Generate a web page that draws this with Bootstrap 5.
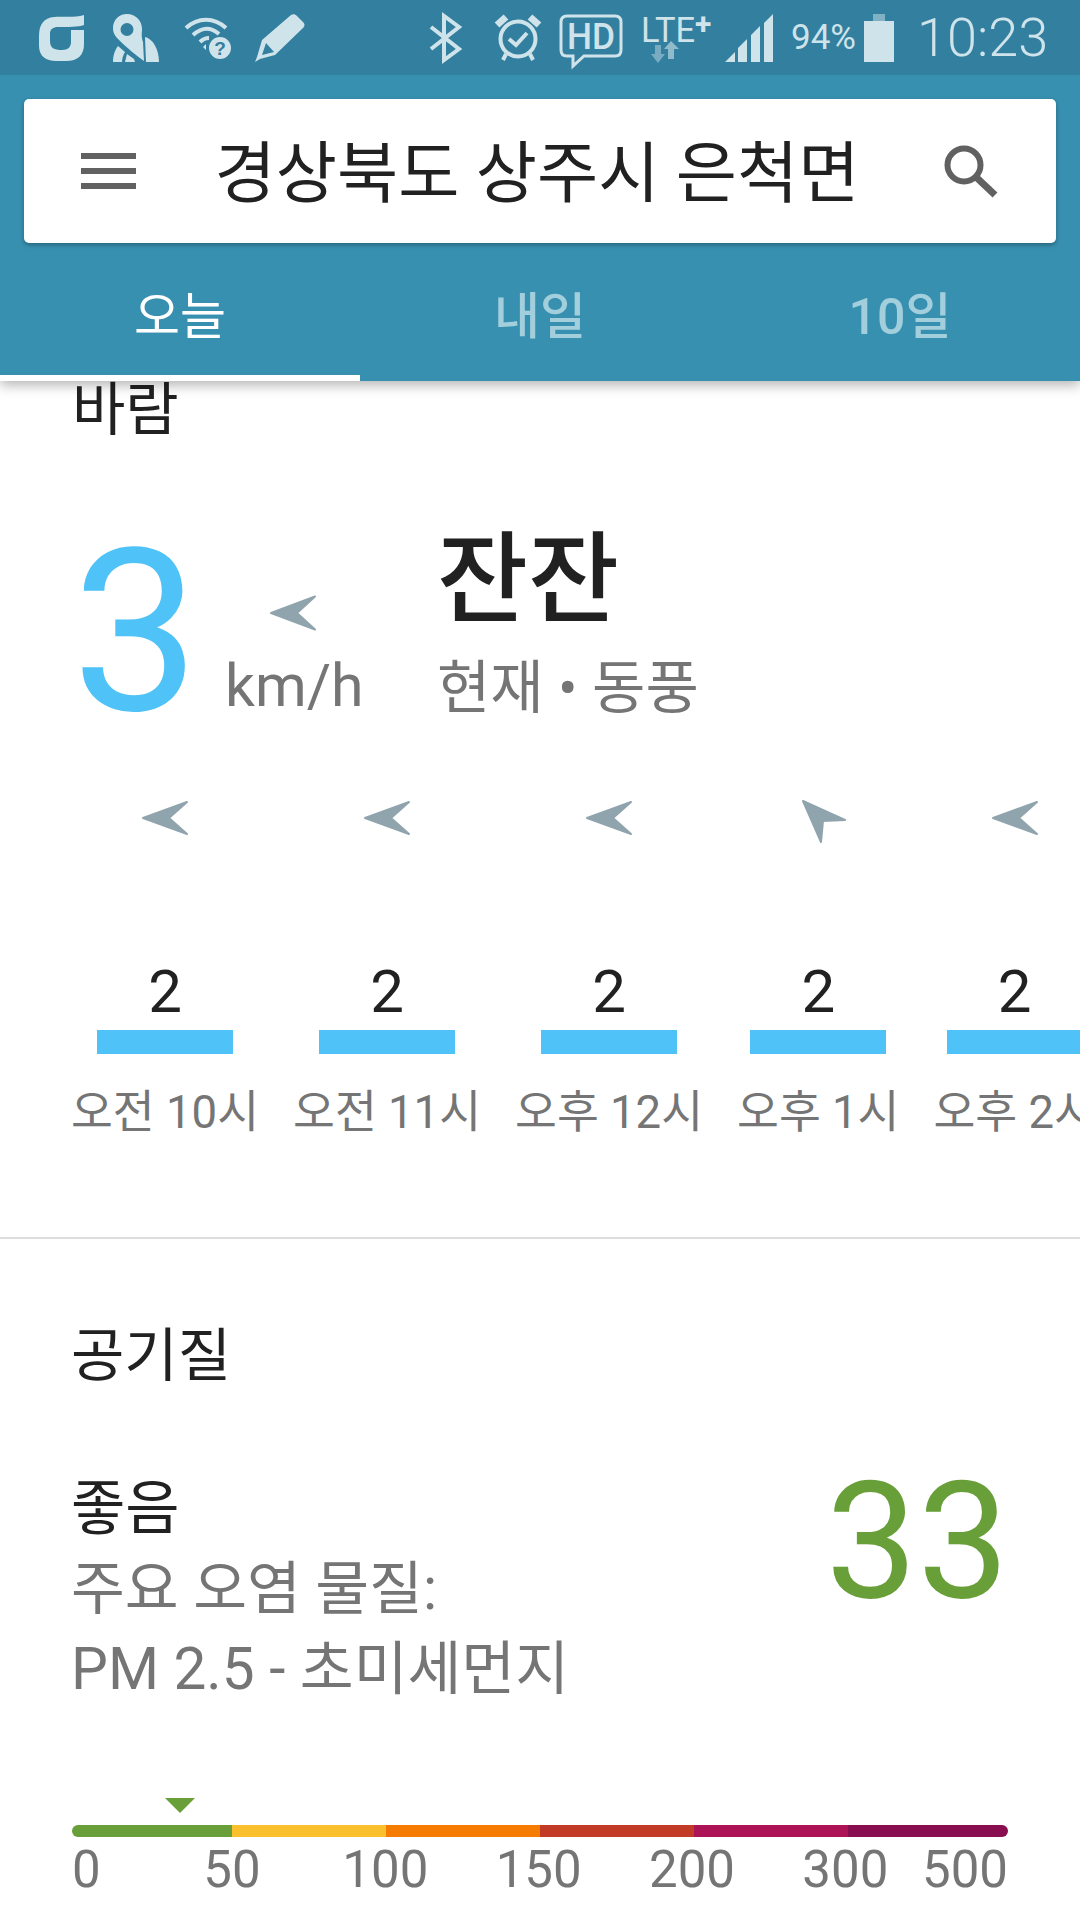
<!DOCTYPE html>
<html lang="ko">

<head>
  <meta charset="UTF-8">
  <meta name="viewport" content="width=device-width, initial-scale=1.0">
  <title>날씨</title>
  <link rel="stylesheet" href="https://cdn.jsdelivr.net/npm/bootstrap@5.3.0/dist/css/bootstrap.min.css">
  <style>
    html, body { width: 1080px; height: 1920px; overflow: hidden; background: #fff; }
    body { font-family: Roboto, "Noto Sans CJK KR", sans-serif; color: #212121; }

    .appbar { background: #3790b0; position: relative; z-index: 2; box-shadow: 0 4px 12px rgba(0,0,0,.3); }
    .statusbar { height: 75px; background: #337f9f; color: #cfe3ea; }
    .statusbar svg { display: block; flex: none; overflow: visible; }
    .st-pct { font-size: 35px; margin-left: 18px; line-height: 1; }
    .st-time { font-size: 54px; font-weight: 300; margin-left: 23px; line-height: 1; }

    .searchbox { margin: 24px 24px 0; height: 144px; border: 0; border-radius: 5px; box-shadow: 0 2px 4px rgba(0,0,0,.3); padding: 0 58px 0 57px; }
    .searchtext { font-size: 66.500px; line-height: 1; color: #212121; flex: 1; text-align: center; padding-right: 6px; margin-top: 6px; }

    .tabbar { height: 138px; }
    .tabbar .nav-link { height: 138px; padding: 44px 0 0; font-size: 50px; line-height: 60px; font-weight: 500; color: #a3cfdd; border-bottom: 6px solid transparent; }
    .tabbar .nav-link.active { color: #fff; font-weight: 400; border-bottom-color: #fff; }

    .pane { padding-left: 72px; }
    .sect-title { font-size: 58px; line-height: 64px; }
    .wind-title { line-height: 58px; }

    .wind-now { height: 236px; margin-top: 58px; }
    .wind-num { width: 151px; font-size: 227px; font-weight: 400; line-height: 236px; color: #4fc3f7; margin-top: 17px; }
    .wind-unit { width: 214px; padding-left: 2px; color: #757575; font-size: 59px; line-height: 64px; }
    .wind-unit svg { display: block; margin: 98px 0 0 46px; overflow: visible; stroke: #90a4ae; stroke-width: 2px; stroke-linejoin: round; }
    .wind-unit div { margin-bottom: 15px; }
    .wind-desc { font-size: 99px; line-height: 110px; font-weight: 500; margin-top: 28px; }
    .wind-sub { font-size: 58px; line-height: 64px; color: #757575; margin-top: 21px; }

    .hours { margin-top: 68px; margin-left: -1px; gap: 34px; white-space: nowrap; }
    .hour-col { flex: none; }
    .hour-arrow { height: 45px; overflow: visible; stroke: #90a4ae; stroke-width: 2px; stroke-linejoin: round; }
    .hour-turn { margin-left: 14px; }
    .hour-val { font-size: 60px; line-height: 64px; margin-top: 114px; }
    .hour-bar { width: 136px; height: 24px; background: #4fc3f7; margin-top: 6px; }
    .hour-label { font-size: 45.500px; line-height: 56px; color: #757575; margin-top: 31px; }

    .divider { height: 2px; background: #ddd; margin-top: 96px; }

    .air-title { margin-top: 85px; margin-left: 71px; }
    .air-row { margin: 91px 72px 0 71px; }
    .air-grade { font-size: 59px; line-height: 60px; color: #212121; margin-bottom: 10px; }
    .air-text { font-size: 58.500px; line-height: 80px; color: #757575; }
    .air-num { font-size: 163px; line-height: 168px; color: #689f38; margin-top: -21px; margin-right: -1px; }

    .scale-wrap { margin: 89px 72px 0; }
    .scale-mark { display: block; margin-left: 93px; }
    .scale-bar { height: 12px; margin-top: 12px; border-radius: 6px; overflow: hidden; }
    .seg-a { width: 160px; background: #689f38; }
    .seg-b { width: 154px; background: #fbc02d; }
    .seg-c { width: 154px; background: #f57c00; }
    .seg-d { width: 154px; background: #c13b26; }
    .seg-e { width: 154px; background: #ad1457; }
    .seg-f { flex: 1; background: #880e4f; }
    .scale-labels { font-size: 51px; line-height: 56px; color: #757575; margin-top: 5px; }
    .lab-first { width: 84px; }
    .lab-mid { width: 154.500px; text-align: center; }
    .lab-last { flex: 1; text-align: right; }
  </style>
</head>

<body>
  <div class="appbar">
    <div class="statusbar d-flex align-items-center">
      <!-- left notification icons -->
      <svg width="46" height="47" viewBox="0 0 46 47" style="margin-left:38px" fill="#cfe3ea"><path d="M46 1C36 4 24 2 16 3C6 4 1 10 1 22V32C1 42 8 47 18 47H28C40 47 46 41 46 30V16H33V28C33 33 30 36 24 36C16 36 12 34 12 27V20C12 15 15 13 20 13C30 13 40 13 46 11Z"/></svg>
      <svg width="47" height="48" viewBox="0 0 47 48" style="margin-left:28px" fill="#cfe3ea"><path fill-rule="evenodd" d="M15 0C24 0 30 7 30 15C30 19 29 22 31 28L32 47C25 42 15 34 7 26C3 22 1 19 1 14C1 6 7 0 15 0ZM15 9A6.500 6.500 0 1 0 15 22A6.500 6.500 0 1 0 15 9Z"/><path d="M33 23C41 25 47 35 47 48H34ZM6 32L13 38C11 41 10 45 10 48H1C1 41 3 36 6 32ZM15 40L22 45L23 48H13Z"/></svg>
      <svg width="47" height="42" viewBox="0 0 47 42" style="margin-left:25px"><g fill="none" stroke="#cfe3ea" stroke-width="4"><path d="M2 11C14 0 30 0 42 11"/><path d="M9 18C18 10 27 10 35 17"/><path d="M16 25C19 22 22 21 25 21"/></g><path d="M22 33L19 30L22 27Z" fill="#cfe3ea"/><circle cx="36" cy="31" r="11" fill="#cfe3ea"/><text x="36" y="38" font-family="Liberation Sans" font-weight="700" font-size="19" text-anchor="middle" fill="#337f9f">?</text></svg>
      <svg width="50" height="48" viewBox="0 0 50 48" style="margin-left:24px" fill="#cfe3ea"><path fill-rule="evenodd" d="M36 1C38 0 40 0 42 2L48 8C50 10 50 12 48 14L20 41L5 45L0 48L2 43L7 26ZM11 29L7 41L19 38Z"/></svg>
      <svg width="33" height="48" viewBox="0 0 33 48" style="margin-left:124px" fill="none" stroke="#cfe3ea" stroke-width="4"><path d="M2 13L30 35L15 46V2L30 13L2 35"/></svg>
      <svg width="46" height="47" viewBox="0 0 46 47" style="margin-left:33px" fill="none" stroke="#cfe3ea"><circle cx="23" cy="25" r="17.500" stroke-width="4"/><path d="M14 25L21 31L32 19" stroke-width="4"/><path d="M2 11L11 3M35 3L44 11" stroke-width="7"/><path d="M11 40L8 46M35 40L38 46" stroke-width="4"/></svg>
      <svg width="64" height="54" viewBox="0 0 64 54" style="margin-left:18px;margin-top:6px"><path d="M8 2H56C60 2 62 4 62 8V36C62 40 60 42 56 42H25L14 52V42H8C4 42 2 40 2 36V8C2 4 4 2 8 2Z" fill="none" stroke="#cfe3ea" stroke-width="3"/><text x="32" y="35" font-family="Roboto" font-weight="500" font-size="37" text-anchor="middle" textLength="48" lengthAdjust="spacingAndGlyphs" fill="#cfe3ea">HD</text></svg>
      <svg width="72" height="50" viewBox="0 0 72 50" style="margin-left:18px"><text x="0" y="29" font-family="Roboto" font-size="35" textLength="54" lengthAdjust="spacingAndGlyphs" fill="#cfe3ea">LTE</text><text x="54" y="21" font-family="Roboto" font-weight="700" font-size="30" fill="#cfe3ea">+</text><path d="M14 32H20V41H24L17 50L10 41H14Z" fill="#cfe3ea" opacity=".45"/><path d="M27 46V36H23L30 28L38 36H33V46Z" fill="#cfe3ea" opacity=".6"/></svg>
      <svg width="48" height="48" viewBox="0 0 48 48" style="margin-left:12px" fill="#cfe3ea"><path d="M0 48L10 38V48ZM13 34L22 25V48H13ZM26 21L35 12V48H26ZM39 9L48 0V48H39Z"/></svg>
      <span class="st-pct">94%</span>
      <svg width="30" height="48" viewBox="0 0 30 48" style="margin-left:8px" fill="#cfe3ea"><rect x="9" width="12" height="7" opacity=".5"/><rect y="7" width="30" height="41"/></svg>
      <span class="st-time">10:23</span>
    </div>

    <div class="card searchbox flex-row align-items-center">
      <svg width="55" height="36" viewBox="0 0 55 36" fill="#616161"><rect width="55" height="6"/><rect y="15" width="55" height="6"/><rect y="30" width="55" height="6"/></svg>
      <span class="searchtext">경상북도 상주시 은척면</span>
      <svg width="54" height="53" viewBox="0 0 54 53" fill="none" stroke="#616161"><circle cx="20" cy="20" r="16.500" stroke-width="6"/><path d="M32 32L51 50" stroke-width="7"/></svg>
    </div>

    <nav class="nav nav-justified tabbar">
      <a class="nav-link active" href="#">오늘</a>
      <a class="nav-link" href="#">내일</a>
      <a class="nav-link" href="#">10일</a>
    </nav>
  </div>

  <div class="pane">
    <div class="sect-title wind-title">바람</div>

    <div class="wind-now d-flex">
      <div class="wind-num">3</div>
      <div class="wind-unit d-flex flex-column justify-content-between">
        <svg width="44" height="36" viewBox="0 0 44 33" fill="#90a4ae"><path d="M0 16.500L44 0L26 16.500L44 33Z"/></svg>
        <div>km/h</div>
      </div>
      <div>
        <div class="wind-desc">잔잔</div>
        <div class="wind-sub">현재 • 동풍</div>
      </div>
    </div>

    <div class="hours d-flex">
      <div class="hour-col d-flex flex-column align-items-center">
        <svg class="hour-arrow" width="44" height="45" viewBox="0 0 44 45" fill="#90a4ae"><path d="M0 17L44 1L26 17L44 33Z"/></svg>
        <div class="hour-val">2</div><div class="hour-bar"></div><div class="hour-label">오전 10시</div>
      </div>
      <div class="hour-col d-flex flex-column align-items-center">
        <svg class="hour-arrow" width="44" height="45" viewBox="0 0 44 45" fill="#90a4ae"><path d="M0 17L44 1L26 17L44 33Z"/></svg>
        <div class="hour-val">2</div><div class="hour-bar"></div><div class="hour-label">오전 11시</div>
      </div>
      <div class="hour-col d-flex flex-column align-items-center">
        <svg class="hour-arrow" width="44" height="45" viewBox="0 0 44 45" fill="#90a4ae"><path d="M0 17L44 1L26 17L44 33Z"/></svg>
        <div class="hour-val">2</div><div class="hour-bar"></div><div class="hour-label">오후 12시</div>
      </div>
      <div class="hour-col d-flex flex-column align-items-center">
        <svg class="hour-arrow hour-turn" width="44" height="45" viewBox="0 0 44 45" fill="#90a4ae"><path d="M0 0L42 19L20 20L18 41Z"/></svg>
        <div class="hour-val">2</div><div class="hour-bar"></div><div class="hour-label">오후 1시</div>
      </div>
      <div class="hour-col d-flex flex-column align-items-center">
        <svg class="hour-arrow" width="44" height="45" viewBox="0 0 44 45" fill="#90a4ae"><path d="M0 17L44 1L26 17L44 33Z"/></svg>
        <div class="hour-val">2</div><div class="hour-bar"></div><div class="hour-label">오후 2시</div>
      </div>
    </div>
  </div>

  <div class="divider"></div>

  <div class="sect-title air-title">공기질</div>
  <div class="air-row d-flex justify-content-between align-items-start">
    <div>
      <div class="air-grade">좋음</div>
      <div class="air-text">주요 오염 물질:</div>
      <div class="air-text">PM 2.5 - 초미세먼지</div>
    </div>
    <div class="air-num">33</div>
  </div>

  <div class="scale-wrap">
    <svg class="scale-mark" width="30" height="15" viewBox="0 0 30 15" fill="#689f38"><path d="M0 0H30L15 15Z"/></svg>
    <div class="scale-bar d-flex">
      <div class="seg-a"></div><div class="seg-b"></div><div class="seg-c"></div><div class="seg-d"></div><div class="seg-e"></div><div class="seg-f"></div>
    </div>
    <div class="scale-labels d-flex">
      <span class="lab-first">0</span><span class="lab-mid">50</span><span class="lab-mid">100</span><span class="lab-mid">150</span><span class="lab-mid">200</span><span class="lab-mid">300</span><span class="lab-last">500</span>
    </div>
  </div>

  <script src="https://cdn.jsdelivr.net/npm/bootstrap@5.3.0/dist/js/bootstrap.bundle.min.js"></script>
</body>

</html>
